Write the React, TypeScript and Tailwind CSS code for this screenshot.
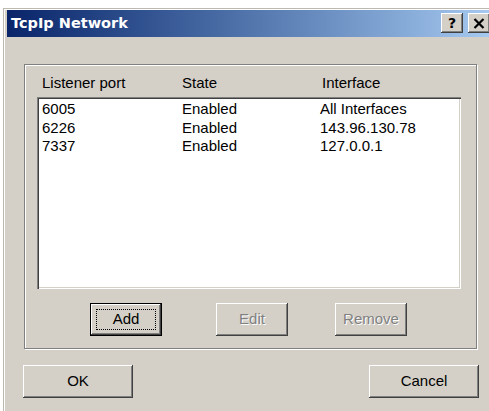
import type { ReactNode } from 'react'

type Listener = {
  port: number
  state: string
  iface: string
}

const listeners: Listener[] = [
  { port: 6005, state: 'Enabled', iface: 'All Interfaces' },
  { port: 6226, state: 'Enabled', iface: '143.96.130.78' },
  { port: 7337, state: 'Enabled', iface: '127.0.0.1' },
]

// classic raised 3d bevel
const raised =
  'bg-[#d4d0c8] shadow-[inset_-1px_-1px_0_#404040,inset_1px_1px_0_#ffffff,inset_-2px_-2px_0_#808080,inset_2px_2px_0_#d4d0c8]'

function DialogButton({
  children,
  width,
  disabled,
  isDefault,
}: {
  children: ReactNode
  width: string
  disabled?: boolean
  isDefault?: boolean
}) {
  if (isDefault) {
    return (
      <div className={`${width} h-[33px] border border-black`}>
        <div className={`${raised} flex h-full w-full p-[5px]`}>
          <span className="flex flex-1 items-center justify-center border border-dotted border-black text-[15px] text-black">
            {children}
          </span>
        </div>
      </div>
    )
  }

  return (
    <div
      className={`${raised} ${width} flex h-[33px] items-center justify-center text-[15px] ${
        disabled ? 'text-[#808080] [text-shadow:1px_1px_0_#ffffff]' : 'text-black'
      }`}
    >
      {children}
    </div>
  )
}

function CaptionButton({ children }: { children: ReactNode }) {
  return (
    <div className={`${raised} flex h-[20px] w-[22px] items-center justify-center`}>{children}</div>
  )
}

export default function App() {
  return (
    <div
      className="h-[411px] w-[489px] overflow-hidden bg-white pl-[3px] pt-[8px]"
      style={{ fontFamily: '"Liberation Sans", Arial, sans-serif' }}
    >
      <div className="h-[403px] w-[492px] border-l border-t border-[#bdb9b1] bg-[#d4d0c8]">
        <div className="h-full border-l border-t border-white pl-[2px]">
          {/* caption */}
          <div className="flex h-[27px] w-[485px] items-start justify-between bg-gradient-to-r from-[#0a246a] to-[#a6caf0] pr-[2px] pt-[3px]">
            <span
              className="pl-[4px] text-[14.5px] font-bold leading-[21px] text-white"
              style={{ fontFamily: '"DejaVu Sans", Verdana, sans-serif' }}
            >
              TcpIp Network
            </span>
            <div className="flex gap-[5px]">
              <CaptionButton>
                <span
                  className="text-[14px] font-bold leading-none text-black"
                  style={{ fontFamily: '"DejaVu Sans", Verdana, sans-serif' }}
                >
                  ?
                </span>
              </CaptionButton>
              <CaptionButton>
                <svg width="12" height="11" viewBox="0 0 12 11">
                  <path d="M1.5 1 L10.5 10 M10.5 1 L1.5 10" stroke="#000" strokeWidth="2.2" />
                </svg>
              </CaptionButton>
            </div>
          </div>

          {/* etched group */}
          <div className="ml-[17px] mt-[27px] h-[285px] w-[453px] border border-[#808080] shadow-[1px_1px_0_#ffffff,inset_1px_1px_0_#ffffff]">
            <div className="grid grid-cols-[140px_140px_1fr] pl-[17px] pt-[9px] text-[15px] leading-[18px] text-black">
              <span>Listener port</span>
              <span>State</span>
              <span>Interface</span>
            </div>

            <div className="ml-[12px] mt-[5px] h-[192px] w-[424px] bg-white shadow-[inset_1px_1px_0_#808080,inset_2px_2px_0_#404040,inset_-1px_-1px_0_#ffffff,inset_-2px_-2px_0_#d4d0c8] pl-[5px] pt-[3px]">
              {listeners.map((l) => (
                <div
                  key={l.port}
                  className="grid grid-cols-[140px_138px_1fr] text-[15px] leading-[18.5px] text-black"
                >
                  <span>{l.port}</span>
                  <span>{l.state}</span>
                  <span>{l.iface}</span>
                </div>
              ))}
            </div>

            <div className="ml-[65px] mt-[14px] flex">
              <DialogButton width="w-[72px]" isDefault>
                Add
              </DialogButton>
              <div className="ml-[54px]">
                <DialogButton width="w-[72px]" disabled>
                  Edit
                </DialogButton>
              </div>
              <div className="ml-[47px]">
                <DialogButton width="w-[72px]" disabled>
                  Remove
                </DialogButton>
              </div>
            </div>
          </div>

          <div className="ml-[16px] mt-[16px] flex w-[456px] justify-between">
            <DialogButton width="w-[110px]">OK</DialogButton>
            <DialogButton width="w-[110px]">Cancel</DialogButton>
          </div>
        </div>
      </div>
    </div>
  )
}
